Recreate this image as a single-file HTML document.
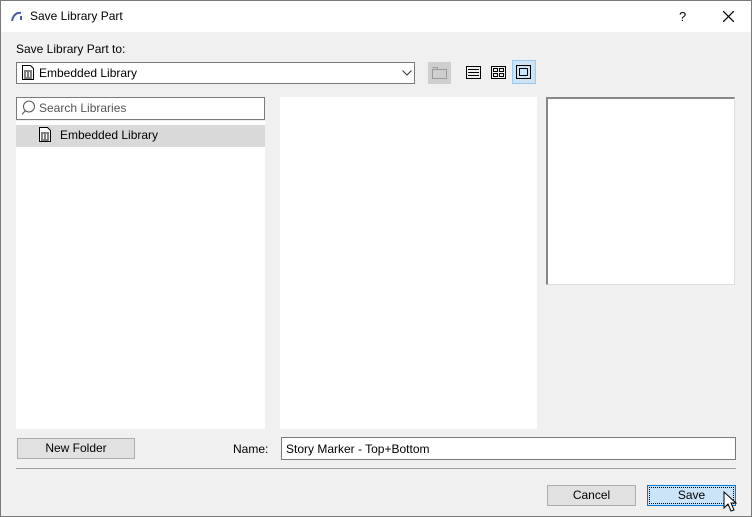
<!DOCTYPE html><html><head><style>
body{margin:0;width:752px;height:517px;overflow:hidden;font-family:"Liberation Sans",sans-serif;font-size:12px;color:#000}
.win{position:absolute;left:0;top:0;width:750px;height:515px;border:1px solid #7a7a7a;background:#f0f0f0}
.a{position:absolute}
.title{left:0;top:0;width:750px;height:31px;background:#fff}
.btn{position:absolute;background:#e1e1e1;border:1px solid #adadad;box-sizing:border-box;text-align:center;line-height:19px}
</style></head><body><div class="win">
<div class="a title"></div>
<svg class="a" style="left:9px;top:9px" width="14" height="12"><path d="M2 11 Q4 2 11 3" stroke="#4a5aa8" stroke-width="2" fill="none"/><path d="M11 6v4" stroke="#4a5aa8" stroke-width="2"/></svg>
<div class="a" style="left:29px;top:8px">Save Library Part</div>
<div class="a" style="left:678px;top:8px;font-size:13px">?</div>
<svg class="a" style="left:722px;top:10px" width="11" height="11"><path d="M0 0L11 11M11 0L0 11" stroke="#000" stroke-width="1.2"/></svg>
<div class="a" style="left:15px;top:41px">Save Library Part to:</div>
<div class="a" style="left:15px;top:61px;width:399px;height:22px;background:#fff;border:1px solid #7a7a7a;box-sizing:border-box"></div>
<svg class="a" style="left:21px;top:64px" width="12" height="15"><path d="M.5 .5h8l3 3v11h-11z" stroke="#000" fill="#fff"/><path d="M2 6h8M3 7v5M6 7v5M9 7v5M2 13h8" stroke="#000"/></svg>
<div class="a" style="left:38px;top:65px">Embedded Library</div>
<svg class="a" style="left:401px;top:69px" width="10" height="6"><path d="M.5.5l4.5 4.5 4.5-4.5" stroke="#333" fill="none"/></svg>
<div class="a" style="left:427px;top:61px;width:23px;height:22px;background:#cfcfcf"></div>
<svg class="a" style="left:431px;top:66px" width="15" height="12"><path d="M.5 2.5h14v9h-14zM.5 .5h5v2" stroke="#999" fill="none"/></svg>
<svg class="a" style="left:465px;top:65px" width="15" height="13"><rect x=".5" y=".5" width="14" height="12" fill="none" stroke="#000"/><path d="M2 3.5h11M2 6.5h11M2 9.5h11" stroke="#000"/></svg>
<svg class="a" style="left:490px;top:65px" width="15" height="13"><rect x=".5" y=".5" width="14" height="12" fill="none" stroke="#000"/><rect x="2.5" y="2.5" width="4" height="3" fill="none" stroke="#000"/><rect x="8.5" y="2.5" width="4" height="3" fill="none" stroke="#000"/><rect x="2.5" y="7.5" width="4" height="3" fill="none" stroke="#000"/><rect x="8.5" y="7.5" width="4" height="3" fill="none" stroke="#000"/></svg>
<div class="a" style="left:511px;top:59px;width:24px;height:24px;background:#cce4f7;border:1px solid #99c9ef;box-sizing:border-box"></div>
<svg class="a" style="left:515px;top:64px" width="15" height="14"><rect x=".5" y=".5" width="14" height="13" fill="none" stroke="#000"/><rect x="3.5" y="3.5" width="8" height="7" fill="none" stroke="#000"/></svg>
<div class="a" style="left:15px;top:96px;width:249px;height:23px;background:#fff;border:1px solid #7a7a7a;box-sizing:border-box"></div>
<svg class="a" style="left:20px;top:99px" width="15" height="16"><circle cx="8" cy="6.5" r="5.5" stroke="#555" fill="none"/><path d="M4.5 10.5l-3.5 4" stroke="#555"/></svg>
<div class="a" style="left:38px;top:100px;color:#555">Search Libraries</div>
<div class="a" style="left:15px;top:120px;width:249px;height:308px;background:#fff"></div>
<div class="a" style="left:15px;top:124px;width:249px;height:22px;background:#d9d9d9"></div>
<svg class="a" style="left:38px;top:126px" width="12" height="15"><path d="M.5 .5h8l3 3v11h-11z" stroke="#000" fill="#fff"/><path d="M2 6h8M3 7v5M6 7v5M9 7v5M2 13h8" stroke="#000"/></svg>
<div class="a" style="left:59px;top:127px">Embedded Library</div>
<div class="a" style="left:279px;top:96px;width:257px;height:332px;background:#fff"></div>
<div class="a" style="left:545px;top:96px;width:189px;height:188px;background:#fff;border-top:2px solid #888;border-left:2px solid #888;border-right:1px solid #ddd;border-bottom:1px solid #ddd;box-sizing:border-box"></div>
<div class="btn" style="left:16px;top:437px;width:118px;height:21px">New Folder</div>
<div class="a" style="left:232px;top:441px">Name:</div>
<div class="a" style="left:280px;top:436px;width:455px;height:23px;background:#fff;border:1px solid #7a7a7a;box-sizing:border-box"></div>
<div class="a" style="left:285px;top:441px">Story Marker - Top+Bottom</div>
<div class="a" style="left:15px;top:467px;width:720px;height:1px;background:#a0a0a0"></div>
<div class="btn" style="left:546px;top:484px;width:89px;height:21px">Cancel</div>
<div class="btn" style="left:646px;top:484px;width:89px;height:21px;background:#cce4f7;border:1px solid #0078d7;outline:1px dotted #000;outline-offset:-3px">Save</div>
<svg class="a" style="left:722px;top:490px" width="14" height="22"><path d="M1 1v16l4-4 3 7 3-1-3-7h5z" fill="#fff" stroke="#000"/></svg>
</div></body></html>
